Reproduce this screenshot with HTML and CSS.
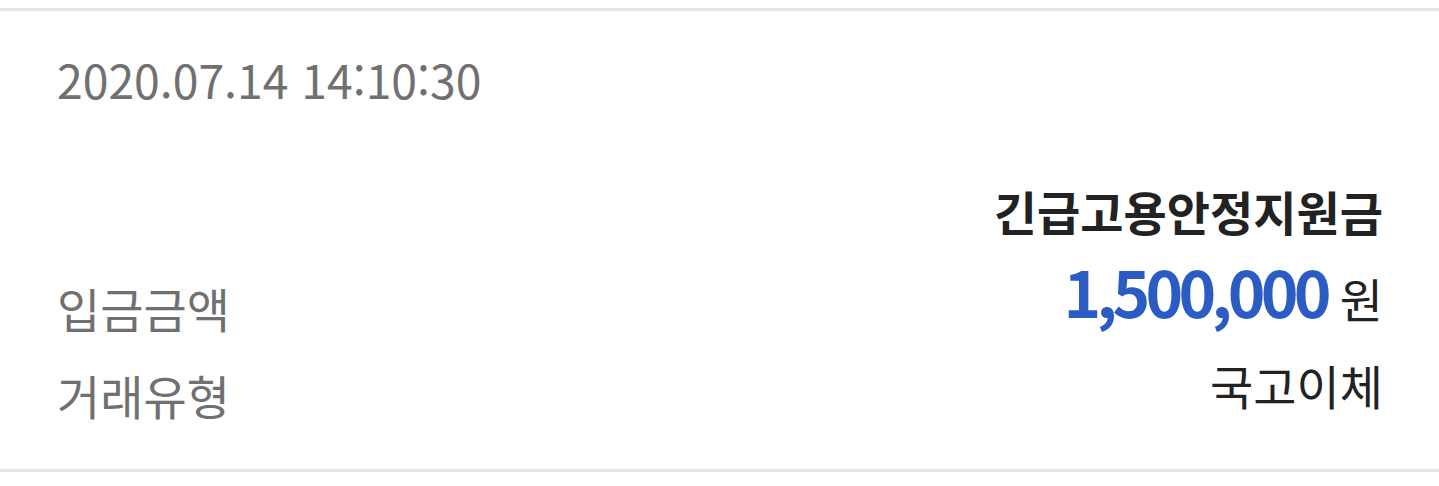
FILE: index.html
```html
<!DOCTYPE html>
<html lang="ko">
<head>
<meta charset="utf-8">
<link rel="stylesheet" href="styles.css">
</head>
<body>
<div class="card">
  <div class="date">2020.07.14 14:10:30</div>
  <div class="title">긴급고용안정지원금</div>
  <div class="row">
    <span class="label">입금금액</span>
    <span class="value"><span class="amount">1,500,000</span><span class="unit">원</span></span>
  </div>
  <div class="row">
    <span class="label">거래유형</span>
    <span class="value">국고이체</span>
  </div>
</div>
</body>
</html>
```
FILE: styles.css
```css
html, body {
  margin: 0;
  padding: 0;
  background: #ffffff;
}
body {
  font-family: "Noto Sans CJK KR", "Noto Sans", sans-serif;
}
.card {
  margin-top: 8px;
  border-top: 3px solid #e5e5e5;
  border-bottom: 3px solid #e5e5e5;
  padding: 40px 56px 41px 57px;
  display: flex;
  flex-direction: column;
}
.date {
  font-size: 46.3px;
  line-height: 55px;
  color: #707070;
}
.title {
  margin-top: 61px;
  font-size: 47px;
  line-height: 87px;
  font-weight: 700;
  color: #222222;
  text-align: right;
}
.row {
  display: flex;
  justify-content: space-between;
  align-items: flex-start;
}
.label {
  padding-top: 10px;
  margin-bottom: -10px;
  font-size: 47px;
  line-height: 87px;
  color: #707070;
}
.value {
  font-size: 47px;
  line-height: 87px;
  color: #222222;
}
.amount {
  font-size: 64px;
  line-height: 1;
  font-weight: 700;
  letter-spacing: -4.75px;
  color: #2b5cc4;
  margin-right: 13px;
}
.unit {
  font-size: 47px;
}
```
